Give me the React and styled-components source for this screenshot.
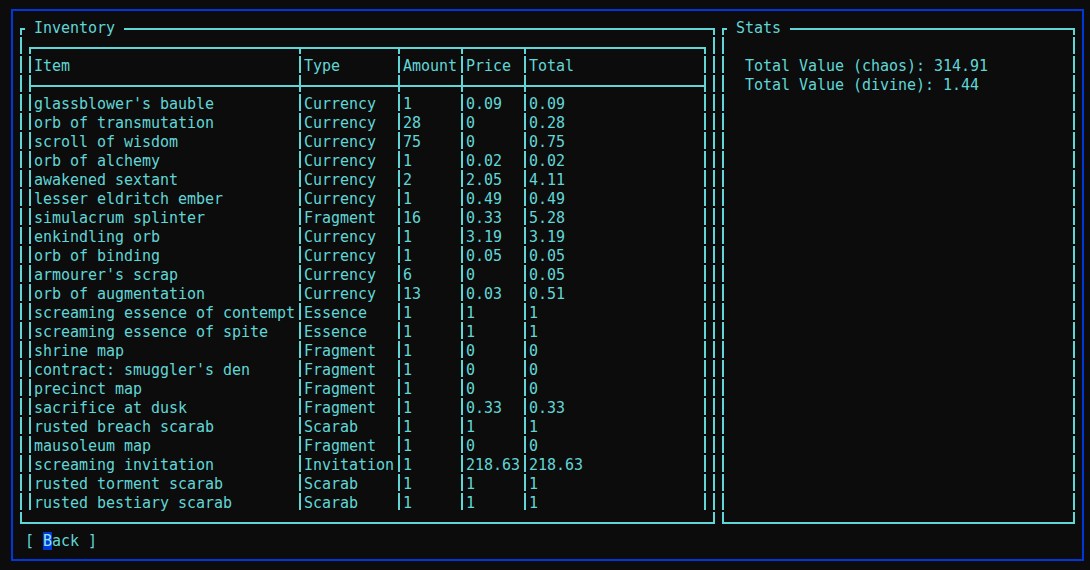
import React from 'react';
import styled, { createGlobalStyle } from 'styled-components';

const CYAN = '#61d6d6';
const BLUE = '#0037da';
const BG = '#0c0c0c';

// one terminal cell of a "│" glyph: line, a 2px gap near the bottom, line again
const VLINE = `linear-gradient(to bottom, ${CYAN} 0 16px, transparent 16px 18px, ${CYAN} 18px 19px)`;

const vlines = xs => `
  background-image: ${xs.map(() => VLINE).join(', ')};
  background-size: 2px 19px;
  background-repeat: repeat-y;
  background-origin: border-box;
  background-position: ${xs.map(x => `${x}px -9px`).join(', ')};
`;

const GlobalStyle = createGlobalStyle`
  html, body {
    margin: 0;
    background: ${BG};
    height: 570px;
    overflow: hidden;
  }
  body {
    font-family: "DejaVu Sans Mono", "Liberation Mono", monospace;
    font-size: 15px;
    letter-spacing: -0.03px;
    color: ${CYAN};
  }
`;

const Screen = styled.div`
  padding: 9px 0 0 11px;
`;

const Window = styled.div`
  box-sizing: border-box;
  width: 1073px;
  height: 552px;
  border: 2px solid ${BLUE};
  padding: 17px 0 0 7px;
  display: flex;
  flex-direction: column;
`;

const Panels = styled.div`
  display: flex;
  gap: 7px;
`;

const Frame = styled.div`
  box-sizing: border-box;
  width: ${p => p.$width}px;
  height: 496px;
  border-top: 2px solid ${CYAN};
  border-bottom: 2px solid ${CYAN};
  ${p => vlines([0, p.$width - 2])}
  display: flex;
  flex-direction: column;
`;

const Title = styled.div`
  align-self: flex-start;
  margin: -11px 0 0 5px;
  height: 19px;
  line-height: 19px;
  background: ${BG};
  white-space: pre;
`;

const Table = styled.div`
  box-sizing: border-box;
  width: 677px;
  height: 464px;
  margin: 9px 0 0 9px;
  border-top: 2px solid ${CYAN};
  ${vlines([0, 270, 369, 432, 495, 675])}
  display: flex;
  flex-direction: column;
`;

const Spacer = styled.div`
  height: 8px;
  flex: none;
`;

const Row = styled.div`
  flex: none;
  display: grid;
  grid-template-columns: 270px 99px 63px 63px 180px;
  height: 19px;
  line-height: 19px;
`;

const Rule = styled.div`
  flex: none;
  height: 19px;
  background: linear-gradient(${CYAN}, ${CYAN}) 0 9px / 677px 2px no-repeat;
`;

const Cell = styled.div`
  padding-left: 5px;
  white-space: pre;
`;

const StatLines = styled.div`
  margin: 19px 0 0 23px;
  white-space: pre;
`;

const StatLine = styled.div`
  height: 19px;
  line-height: 19px;
`;

const Footer = styled.div`
  margin: 8px 0 0 5px;
  height: 19px;
  line-height: 19px;
  white-space: pre;
`;

const Hotkey = styled.span`
  background: ${BLUE};
  color: #8fe6ee;
`;

const columns = ['Item', 'Type', 'Amount', 'Price', 'Total'];

const items = [
  ["glassblower's bauble", 'Currency', '1', '0.09', '0.09'],
  ['orb of transmutation', 'Currency', '28', '0', '0.28'],
  ['scroll of wisdom', 'Currency', '75', '0', '0.75'],
  ['orb of alchemy', 'Currency', '1', '0.02', '0.02'],
  ['awakened sextant', 'Currency', '2', '2.05', '4.11'],
  ['lesser eldritch ember', 'Currency', '1', '0.49', '0.49'],
  ['simulacrum splinter', 'Fragment', '16', '0.33', '5.28'],
  ['enkindling orb', 'Currency', '1', '3.19', '3.19'],
  ['orb of binding', 'Currency', '1', '0.05', '0.05'],
  ["armourer's scrap", 'Currency', '6', '0', '0.05'],
  ['orb of augmentation', 'Currency', '13', '0.03', '0.51'],
  ['screaming essence of contempt', 'Essence', '1', '1', '1'],
  ['screaming essence of spite', 'Essence', '1', '1', '1'],
  ['shrine map', 'Fragment', '1', '0', '0'],
  ["contract: smuggler's den", 'Fragment', '1', '0', '0'],
  ['precinct map', 'Fragment', '1', '0', '0'],
  ['sacrifice at dusk', 'Fragment', '1', '0.33', '0.33'],
  ['rusted breach scarab', 'Scarab', '1', '1', '1'],
  ['mausoleum map', 'Fragment', '1', '0', '0'],
  ['screaming invitation', 'Invitation', '1', '218.63', '218.63'],
  ['rusted torment scarab', 'Scarab', '1', '1', '1'],
  ['rusted bestiary scarab', 'Scarab', '1', '1', '1'],
];

export default function App() {
  return (
    <>
      <GlobalStyle />
      <Screen>
        <Window>
          <Panels>
            <Frame $width={695}>
              <Title> Inventory </Title>
              <Table>
                <Spacer />
                <Row>
                  {columns.map(c => <Cell key={c}>{c}</Cell>)}
                </Row>
                <Rule />
                {items.map((row, i) => (
                  <Row key={i}>
                    {row.map((v, j) => <Cell key={j}>{v}</Cell>)}
                  </Row>
                ))}
              </Table>
            </Frame>
            <Frame $width={353}>
              <Title> Stats </Title>
              <StatLines>
                <StatLine>Total Value (chaos): 314.91</StatLine>
                <StatLine>Total Value (divine): 1.44</StatLine>
              </StatLines>
            </Frame>
          </Panels>
          <Footer>[ <Hotkey>B</Hotkey>ack ]</Footer>
        </Window>
      </Screen>
    </>
  );
}
